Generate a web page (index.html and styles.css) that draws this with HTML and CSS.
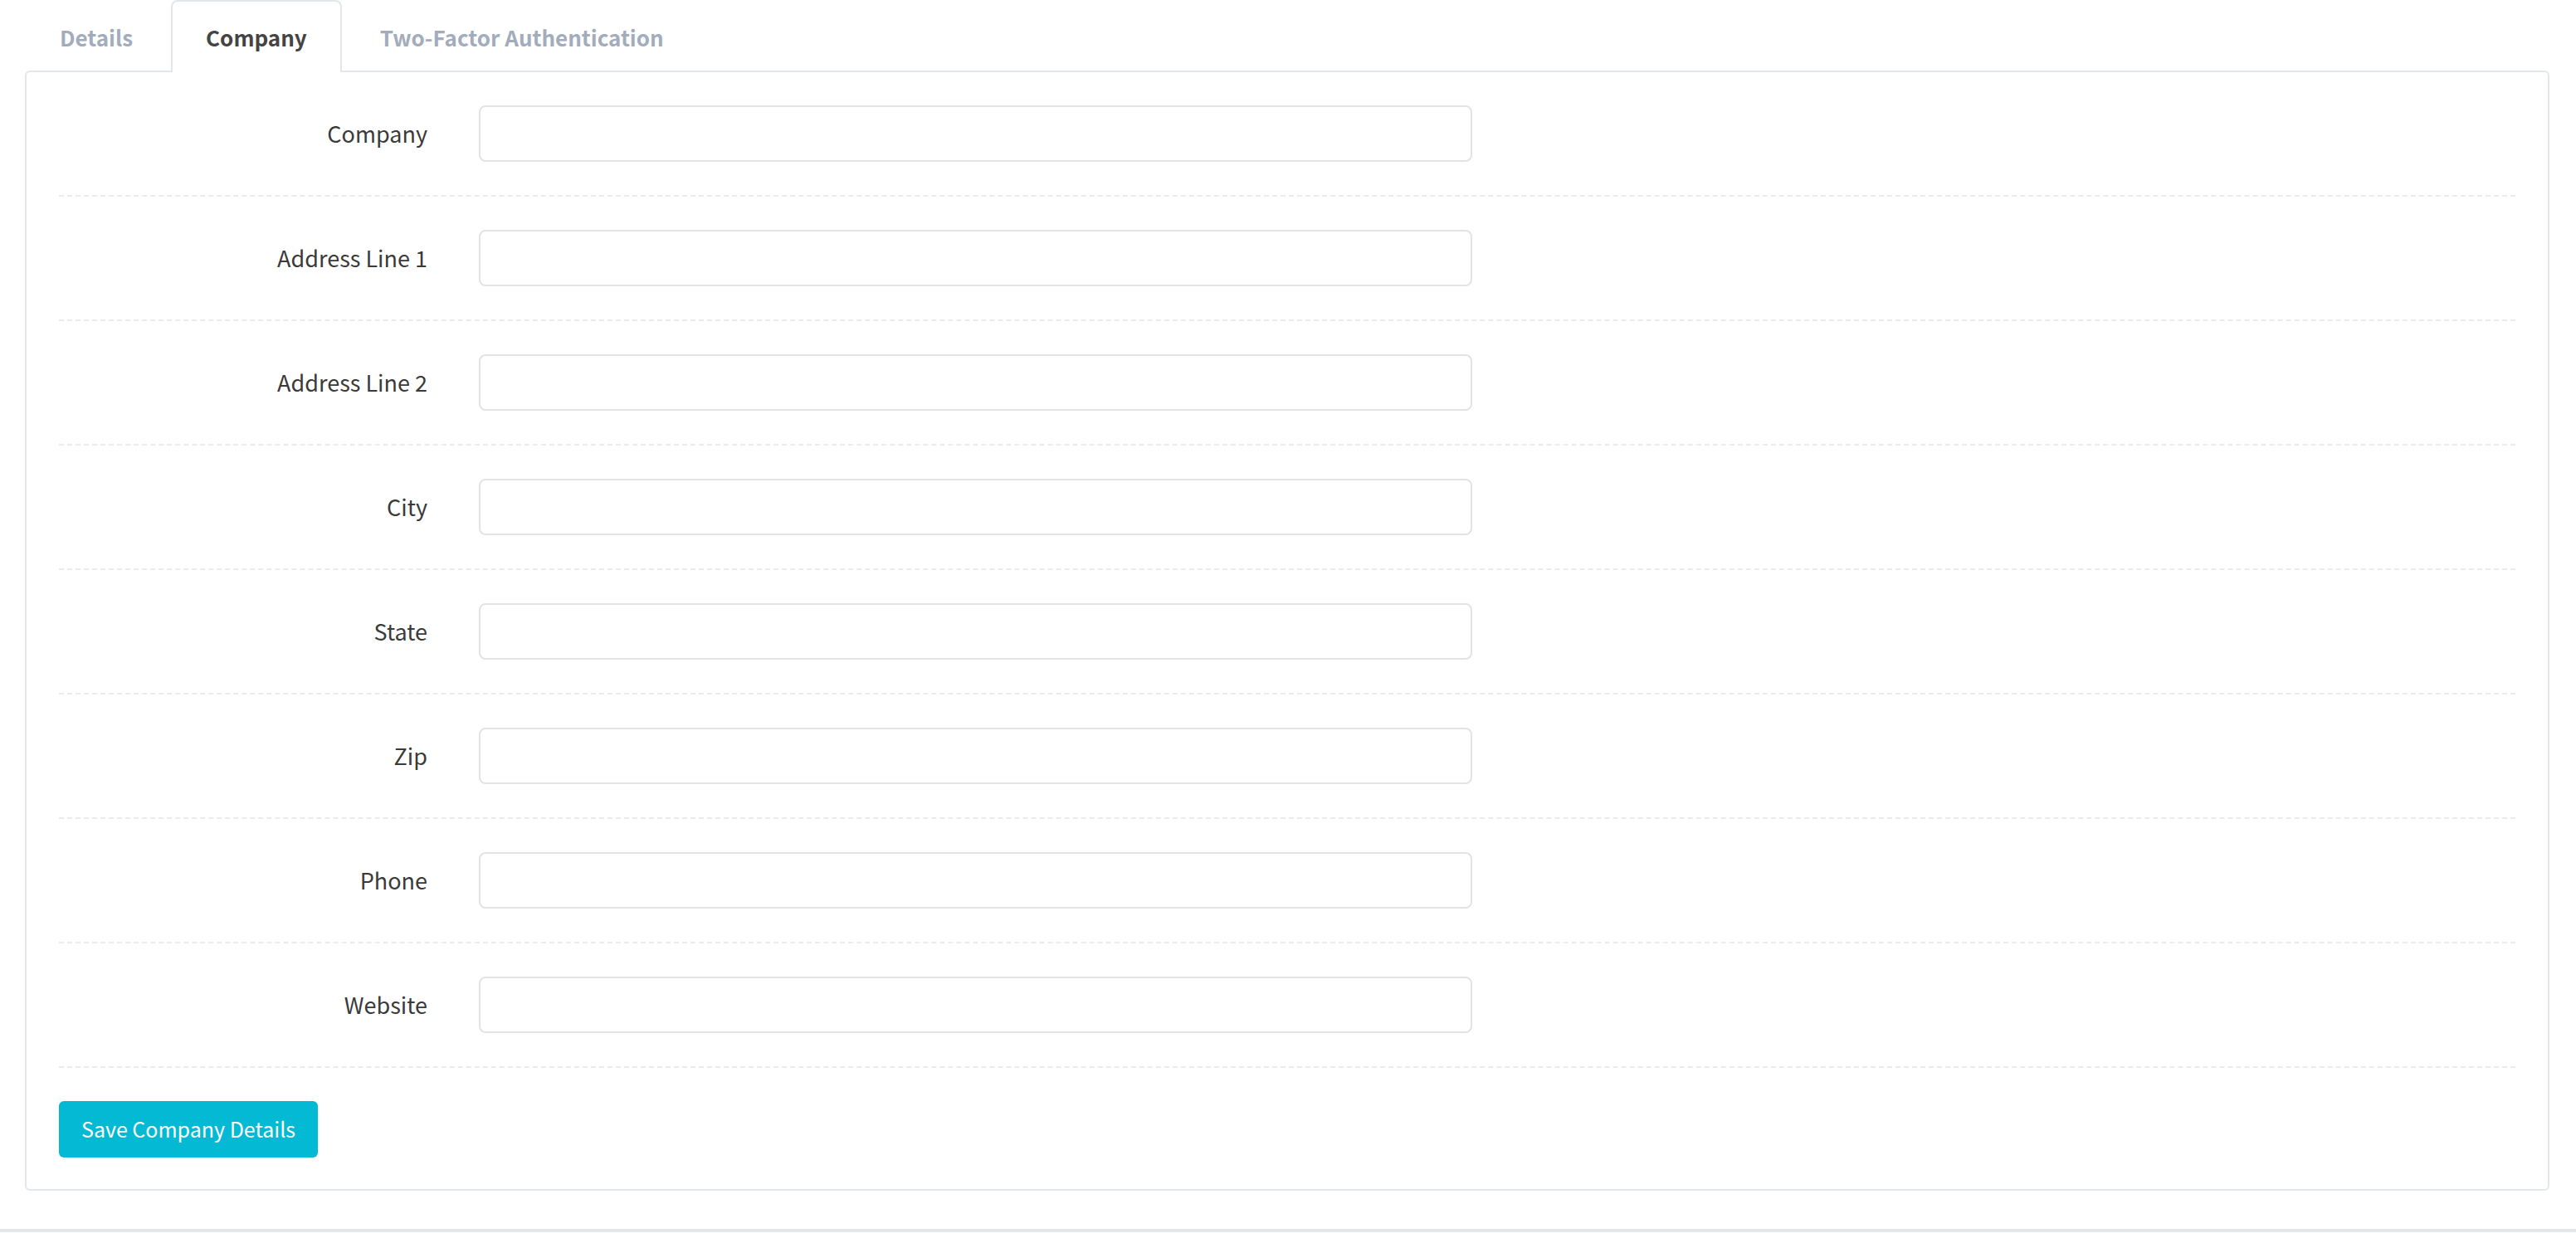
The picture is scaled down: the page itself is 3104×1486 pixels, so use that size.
FILE: index.html
```html
<!DOCTYPE html>
<html>
<head>
<meta charset="UTF-8">
<title>Company</title>
<link rel="stylesheet" href="styles.css">
</head>
<body>
<div class="page">
  <ul class="tabs">
    <li><a href="#">Details</a></li>
    <li class="active"><a href="#">Company</a></li>
    <li><a href="#">Two-Factor Authentication</a></li>
  </ul>
  <form class="card">
    <div class="row"><label>Company</label><input type="text" class="text"></div>
    <div class="row"><label>Address Line 1</label><input type="text" class="text"></div>
    <div class="row"><label>Address Line 2</label><input type="text" class="text"></div>
    <div class="row"><label>City</label><input type="text" class="text"></div>
    <div class="row"><label>State</label><input type="text" class="text"></div>
    <div class="row"><label>Zip</label><input type="text" class="text"></div>
    <div class="row"><label>Phone</label><input type="text" class="text"></div>
    <div class="row"><label>Website</label><input type="text" class="text"></div>
    <div class="actions"><button type="button" class="btn">Save Company Details</button></div>
  </form>
</div>
<div class="footer"></div>
</body>
</html>
```
FILE: styles.css
```css
*{ margin:0; padding:0; box-sizing:border-box;}
body{ font:27px/1.5 "Noto Sans CJK SC","Source Sans Pro","Open Sans",sans-serif; color:#444; background:#fff;}
ul,li{ list-style:none;}
a{ text-decoration:none;}
input:focus,button:focus{ outline:none;}

.page{ padding:0 32px 0 30px;}

/*tabs*/
.tabs{ display:flex; height:87px;}
.tabs li{ margin-right:4px;}
.tabs a{ display:block; height:87px; padding:0 40px; line-height:85px; font-size:26px; font-weight:bold; color:#a2acbd; border:2px solid transparent; border-bottom:none; border-radius:8px 8px 0 0;}
.tabs .active a{ color:#444; background:#fff; border-color:#e4e7ea; position:relative; z-index:1;}

/*card*/
.card{ margin-top:-2px; border:2px solid #e4e7ea; border-radius:6px; padding:0 39px 38px 39px; background:#fff;}
.row{ display:flex; align-items:center; padding:40px 0; border-bottom:2px dashed #e9ebee;}
.row label{ width:444px; margin-right:62px; text-align:right; color:#3a3a3a;}
.row .text{ width:1197px; height:68px; padding:0 20px; border:2px solid #e3e3e3; border-radius:8px; font:inherit; background:#fff;}
.actions{ padding-top:40px;}
.btn{ height:68px; padding:0 27px; border:none; border-radius:6px; background:#04b9d4; color:#fff; font:inherit; font-size:25px;}

.footer{ margin-top:46px; height:4px; background:#e4e7ea;}
```
